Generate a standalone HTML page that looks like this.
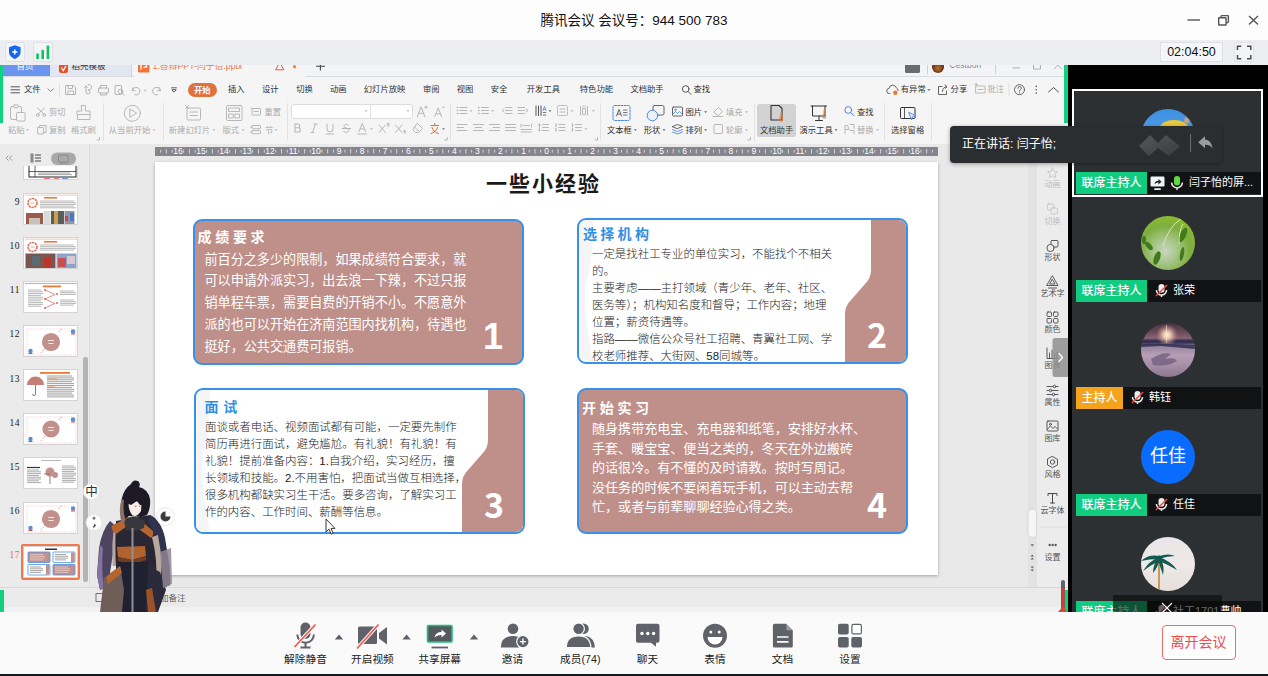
<!DOCTYPE html>
<html lang="zh-CN">
<head>
<meta charset="utf-8">
<title>腾讯会议</title>
<style>
*{box-sizing:border-box;margin:0;padding:0}
html,body{width:1268px;height:676px;overflow:hidden;background:#fff}
body{font-family:"Liberation Sans","Noto Sans CJK SC",sans-serif;position:relative;color:#222}
.abs{position:absolute}
svg{display:block;overflow:visible}
#titlebar{left:0;top:0;width:1268px;height:40px;background:#fdfdfd}
#title{left:0;top:11.500px;width:1268px;text-align:center;font-size:13.500px;line-height:18px;color:#111}
#tmbar{left:0;top:39.500px;width:1268px;height:25.500px;background:#edeef2}
#share{left:0;top:65px;width:1068px;height:547px;background:#e9e9e9;overflow:hidden}
#right{left:1068px;top:65px;width:200px;height:547px;background:#000;overflow:hidden}
#bottombar{left:0;top:612px;width:1268px;height:62px;background:#fafafa}
#darkstrip{left:0;top:674px;width:1268px;height:2px;background:#15161f}
.ibox{width:20px;height:20px;border:1px solid #e0e1e5;border-radius:2px;background:#f3f4f6}
#timer{left:1160px;top:42px;width:63px;height:20px;border:1px solid #dfe0e4;background:#f5f6f8;font-size:12.500px;line-height:18px;text-align:center;color:#111}
#tiles{left:4px;top:24px;width:191px;height:530px;background:#2d3033}
#t1b{left:4px;top:24px;width:191px;height:108px;border:2px solid #fff}
.av{width:54px;height:54px;border-radius:50%;overflow:hidden}
.lbar{left:8px;width:185px;height:22px;background:#111214}
.role{left:8px;height:22px;color:#fff;font-size:12px;line-height:22.500px;text-align:center;font-weight:500}
.pname{height:22px;line-height:21px;font-size:11px;color:#fff;white-space:nowrap}
#tip{left:950px;top:126px;width:272px;height:37px;background:#2b2e31;border-radius:4px;box-shadow:0 1px 4px rgba(0,0,0,.35);color:#fff;font-size:12px;line-height:37px;padding-left:12px}
#tabs{left:0;top:0;width:1068px;height:12px;background:#f3f4f7;border-bottom:1px solid #d9dbe0}
.tb{position:absolute;top:0;height:11px}
.tt{position:absolute;top:-6.600px;font-size:8.500px;line-height:16px;white-space:nowrap}
#menurow{left:0;top:12px;width:1068px;height:66.500px;background:#f5f5f5}
.mi{position:absolute;top:5.300px;font-size:8.300px;line-height:15px;color:#333;white-space:nowrap}
.rl{position:absolute;font-size:8.300px;line-height:12px;color:#333;white-space:nowrap}
.g{color:#ababab}
.vsep{position:absolute;width:1px;background:#e2e2e2;top:38px;height:38px}
#gl{left:0;top:0;width:3.300px;height:58px;background:#0fd180}
#gr{left:1064px;top:0;width:4px;height:58px;background:#0fd180}
#lp{left:0;top:78.500px;width:90px;height:528px;background:#ebebeb;border-right:1px solid #dedede}
.th{position:absolute;left:23px;width:55px;height:32px;background:#fff;border:1px solid #d4d4d4;overflow:hidden}
.tn{position:absolute;left:0;width:20px;text-align:right;font-family:"Liberation Serif",serif;font-size:9.500px;line-height:10px;color:#222;letter-spacing:.5px}
#ruler{left:155px;top:82px;width:783px;height:8.500px;background:#85858d;overflow:hidden}
.rn{position:absolute;top:-.8px;width:14px;text-align:center;font-size:8.500px;line-height:10px;color:#fff}
#slide{left:155px;top:97px;width:783px;height:413px;background:#fff;box-shadow:0 1px 3px rgba(0,0,0,.3)}
#stitle{left:0;top:4px;width:783px;text-align:center;font-size:21px;font-weight:700;letter-spacing:2px;line-height:36px;color:#1a1a1a;padding-right:6px}
.card{width:331px;height:146px;border:2px solid #3791e8;border-radius:9px;overflow:hidden}
.cb{background:#bf908a}
.cw{background:#fff}
.ch{position:absolute;font-size:14px;font-weight:700;letter-spacing:3.700px;line-height:18px;white-space:nowrap}
.cbody{position:absolute;white-space:nowrap}
.num{position:absolute;font-size:36px;font-weight:700;color:#fff;line-height:36px;font-family:"Noto Sans CJK SC","Liberation Sans",sans-serif}
#sp{left:1037px;top:78.500px;width:31px;height:443.500px;background:#ececec}
#vsb{left:1028px;top:78.500px;width:9px;height:443.500px;background:#e3e3e3}
.sl{position:absolute;left:1037px;width:31px;text-align:center;font-size:8px;line-height:10px;color:#555;white-space:nowrap}
#status{left:0;top:522px;width:1068px;height:20px;background:#ebebeb;border-top:1px solid #d8d8d8}
#status2{left:0;top:542px;width:1068px;height:5px;background:#f1f1f1}
.bl{position:absolute;top:40px;width:80px;text-align:center;font-size:10.700px;line-height:14px;color:#222;white-space:nowrap}
#leave{left:1161.500px;top:13px;width:74px;height:35px;border:1px solid #f26a6a;border-radius:4px;color:#ee4b4b;font-size:14px;line-height:33px;text-align:center;background:#fdfdfd}
</style>
</head>
<body>
<div id="titlebar" class="abs"></div>
<div id="title" class="abs">腾讯会议 会议号：944 500 783</div>
<svg class="abs" style="left:1180px;top:8px" width="84" height="24" viewBox="1180 8 84 24" fill="none" stroke="#555" stroke-width="1.400">
<path d="M1187.500 20h12.500"/>
<rect x="1218.700" y="17.800" width="7.400" height="7.200" rx=".6"/><path d="M1221 17.800v-1.400a.8.800 0 0 1 .8-.8h5.800a.8.800 0 0 1 .8.800v5.400a.8.800 0 0 1-.8.800h-1.700"/>
<path d="M1249 16l9 8.600M1258 16l-9 8.600"/>
</svg>
<div id="tmbar" class="abs"></div>
<div class="abs ibox" style="left:5px;top:42px"></div>
<div class="abs ibox" style="left:33px;top:42px"></div>
<svg class="abs" style="left:5px;top:42px" width="50" height="20" viewBox="5 42 50 20">
<path d="M14.800 45.200l5.800 2v4.600c0 3.600-2.600 6-5.800 7.200-3.200-1.200-5.800-3.600-5.800-7.200v-4.600z" fill="#1466f0"/>
<path d="M14.800 49.400v5.200M12.200 52h5.200" stroke="#fff" stroke-width="1.500" fill="none"/>
<rect x="36.200" y="53.500" width="2.600" height="5.500" rx=".6" fill="#0fc15f"/><rect x="41.400" y="49.800" width="2.600" height="9.200" rx=".6" fill="#0fc15f"/><rect x="46.600" y="45.500" width="2.600" height="13.500" rx=".6" fill="#0fc15f"/>
</svg>
<div class="abs" id="timer">02:04:50</div>
<div class="abs ibox" style="left:1234px;top:42px"></div>
<svg class="abs" style="left:1234px;top:42px" width="20" height="20" viewBox="1234 42 20 20" fill="none" stroke="#4a4c52" stroke-width="1.500">
<path d="M1237.500 50v-3.800h3.800M1247 46.200h3.800v3.800M1250.800 55v3.800h-3.800M1241.300 58.800h-3.800v-3.800"/></svg>
<div id="share" class="abs">
<div class="abs" id="tabs"><div class="tb" style="left:3px;width:47px;background:#6a95ee"></div><div class="tt" style="left:16.500px;color:#fff">首页</div><div class="tb" style="left:50px;width:82px;background:#e1e6f1;border-right:1px solid #cfd4de"></div><div class="tt" style="left:71.500px;color:#333">稻壳模板</div><svg class="abs" style="left:59px;top:1.500px" width="10" height="8" viewBox="0 0 10 8"><path d="M0 -3h9v6.500a2.500 2.500 0 0 1-2.500 2.500h-4a2.500 2.500 0 0 1-2.500-2.500z" fill="#f04b1f"/><path d="M2.300 .5l2 3.200 2.700-5" stroke="#fff" stroke-width="1.300" fill="none"/></svg><div class="tb" style="left:134px;width:172px;background:#f5f5f5;height:12px;border-radius:0"></div><svg class="abs" style="left:138px;top:0" width="12" height="8" viewBox="0 0 12 8"><path d="M0 -4h11.500v10.500a1 1 0 0 1-1 1h-9.500a1 1 0 0 1-1-1z" fill="#f0733c"/><path d="M3 4.500v-5.500h5.500v3.200h-3" stroke="#fff" stroke-width="1.300" fill="none"/></svg><div class="tt" style="left:152.500px;color:#e9743c;font-size:8.800px">1.答辩PPT-闫子怡.pptx</div><svg class="abs" style="left:274px;top:0" width="26" height="8" viewBox="274 0 26 8"><path d="M275.500 4.800l4.200-7.500 4.200 7.500z" fill="none" stroke="#e0574a" stroke-width="1"/><circle cx="294.500" cy="1.800" r="1.700" fill="#f08a3c"/></svg><svg class="abs" style="left:314px;top:0" width="12" height="8" viewBox="314 0 12 8"><path d="M320.400 -2v7.500M316 1.300h9" stroke="#444" stroke-width="1.100"/></svg><div class="tb" style="left:905px;width:15px;height:7.500px;background:#6b6b6b;border-radius:0 0 1.500px 1.500px"></div><div class="tb" style="left:926.500px;width:1px;height:9px;background:#cfd1d6"></div><div class="tb" style="left:994.500px;width:1px;height:9px;background:#cfd1d6"></div><div class="tb" style="left:932px;top:-4px;width:12px;height:12px;border-radius:50%;background:radial-gradient(circle at 50% 60%,#b9742f 0,#6b2f18 60%,#3a1c12 100%)"></div><div class="tt" style="left:949.500px;color:#8a8a8a;top:-8px">Cestbon</div><svg class="abs" style="left:1010px;top:0" width="54" height="8" viewBox="1010 0 54 8" fill="none" stroke="#b0b0b0" stroke-width="1"><path d="M1012.700 2.900h7.300"/><path d="M1033.500 -2v6h7v-8"/><path d="M1054 -4l7.500 8M1061.500 -4l-7.500 8"/></svg></div><div class="abs" id="menurow"><div class="mi " style="left:24px">文件</div><div class="mi " style="left:228px">插入</div><div class="mi " style="left:262px">设计</div><div class="mi " style="left:296.3px">切换</div><div class="mi " style="left:330px">动画</div><div class="mi " style="left:363.8px">幻灯片放映</div><div class="mi " style="left:423px">审阅</div><div class="mi " style="left:456.7px">视图</div><div class="mi " style="left:490.7px">安全</div><div class="mi " style="left:526.8px">开发工具</div><div class="mi " style="left:579.8px">特色功能</div><div class="mi " style="left:630.4px">文档助手</div><div class="mi " style="left:693.5px">查找</div><div class="mi " style="left:900.8px">有异常</div><div class="mi " style="left:950.6px">分享</div><div class="mi g" style="left:987.5px">批注</div><div class="abs" style="left:187.500px;top:6px;width:29.500px;height:14px;border-radius:7px;background:#e0723d;color:#fff;font-size:8.300px;font-weight:700;line-height:14px;text-align:center">开始</div></div><svg class="abs" style="left:0;top:12px" width="1068" height="67" viewBox="0 77 1068 67" fill="none" stroke-linecap="round" stroke-linejoin="round"><path d="M11 86.800h8.500M11 89.800h8.500M11 92.800h8.500" stroke="#555" stroke-width="1"/><path d="M48 88.800l2.700 2.700 2.700-2.700" stroke="#777" stroke-width=".9"/><path d="M59.500 84.500v12" stroke="#ddd" stroke-width="1"/><g stroke="#b4b4b4" stroke-width="1"><path d="M66 85.500h7.500l2 2v7h-9.500z"/><path d="M68 85.500v3h4.500v-3M68 94.500v-3.500h5.500v3.500"/><path d="M84.500 87.500l1.500-1.500 1.500 1.500M86 86v6a2 2 0 1 0 2-2c2 0 3.500-1.200 3.500-2.800s-1.500-2.700-3.500-2.700"/><rect x="98.500" y="88" width="10" height="5" rx="1"/><path d="M100.500 88v-2.500h6v2.500M100.500 93v2h6v-2"/><rect x="115" y="85.500" width="6.500" height="9" rx=".8"/><circle cx="120.500" cy="91.500" r="2.300"/><path d="M122.200 93.200l2 2"/><path d="M133 87.500l-1 3 3 .3M132.300 90.300a3.800 3.800 0 1 1 2.500 4.500"/><path d="M159.500 87.500l1 3-3 .3M160.200 90.300a3.800 3.800 0 1 0-2.500 4.500"/></g><path d="M143.4 89.7h3.200l-1.600 1.800z" fill="#b4b4b4"/><path d="M171.500 87.800h5M172 90l2 2.200 2-2.200z" stroke="#555" stroke-width=".9"/><circle cx="685.700" cy="89" r="3.300" stroke="#555" stroke-width="1"/><path d="M688.200 91.600l2.800 2.800" stroke="#555" stroke-width="1"/><path d="M890 93.500h-.5a2.600 2.600 0 0 1-.3-5.200 3.600 3.600 0 0 1 7-.6 2.800 2.800 0 0 1 1.800 2.800" stroke="#555" stroke-width=".9"/><circle cx="895.300" cy="92.800" r="2.200" fill="#ee7a33" stroke="none"/><path d="M927.4 89.2h3.200l-1.600 1.800z" fill="#666"/><path d="M942 86.500h-3.500v8h8v-3.500M942.500 91.500c0-3 1.500-4.500 4-4.700M945 85l2 1.800-2 1.800" stroke="#555" stroke-width=".9"/><path d="M976 86h9v7h-9zM978 89.500h5M975 84.500h2.500M976.200 83.200v2.600" stroke="#b4b4b4" stroke-width=".9"/><path d="M1009 84v12" stroke="#ddd"/><circle cx="1019.500" cy="89.700" r="5" stroke="#555" stroke-width=".9"/><path d="M1017.900 88.300a1.700 1.700 0 1 1 2.400 1.500c-.6.300-.8.700-.8 1.400M1019.500 92.700v.2" stroke="#555" stroke-width=".9"/><circle cx="1036.300" cy="86.300" r=".8" fill="#555"/><circle cx="1036.300" cy="89.700" r=".8" fill="#555"/><circle cx="1036.300" cy="93.100" r=".8" fill="#555"/><path d="M1048.500 92l5-4.500 5 4.500" stroke="#555" stroke-width="1"/></svg><div class="abs" id="gl"></div><div class="abs" id="gr"></div><div class="rl g" style="left:8px;top:58.5px">粘贴</div><div class="rl g" style="left:49px;top:41.0px">剪切</div><div class="rl g" style="left:49px;top:58.5px">复制</div><div class="rl g" style="left:71px;top:58.5px">格式刷</div><div class="rl g" style="left:108.8px;top:58.5px">从当前开始</div><div class="rl g" style="left:168.8px;top:58.5px">新建幻灯片</div><div class="rl g" style="left:222.5px;top:58.5px">版式</div><div class="rl g" style="left:264.5px;top:41.0px">重置</div><div class="rl g" style="left:265px;top:58.5px">节</div><div class="rl " style="left:607px;top:58.5px">文本框</div><div class="rl " style="left:643.8px;top:58.5px">形状</div><div class="rl " style="left:685.4px;top:41.0px">图片</div><div class="rl " style="left:685.4px;top:58.5px">排列</div><div class="rl g" style="left:726px;top:41.0px">填充</div><div class="rl g" style="left:726px;top:58.5px">轮廓</div><div class="abs" style="left:757px;top:38.500px;width:39px;height:33.500px;background:#d2d2d2;border-radius:2.500px"></div><div class="rl " style="left:760px;top:58.5px">文档助手</div><div class="rl " style="left:799.5px;top:58.5px">演示工具</div><div class="rl " style="left:857px;top:41.0px">查找</div><div class="rl g" style="left:857px;top:58.5px">替换</div><div class="rl " style="left:891px;top:59.0px">选择窗格</div><div class="abs" style="left:290.500px;top:38.500px;width:122px;height:15.500px;background:#fff;border:1px solid #dcdcdc;border-radius:3px"></div><div class="abs" style="left:370px;top:39px;width:1px;height:14.500px;background:#e0e0e0"></div><div class="vsep" style="left:102.5px"></div><div class="vsep" style="left:162.5px"></div><div class="vsep" style="left:286.8px"></div><div class="vsep" style="left:450.4px"></div><div class="vsep" style="left:600px"></div><div class="vsep" style="left:754px"></div><div class="vsep" style="left:884px"></div><div class="vsep" style="left:930.7px"></div><svg class="abs" style="left:0;top:36px" width="1068" height="44" viewBox="0 101 1068 44" fill="none" stroke="#b8b8b8" stroke-width="1" stroke-linecap="round" stroke-linejoin="round"><rect x="10.500" y="106.500" width="11" height="13" rx="1.500"/><rect x="13.500" y="105" width="5" height="2.600" rx=".8" fill="#f5f5f5"/><rect x="16.500" y="112.500" width="8.500" height="8.500" rx="1" fill="#f5f5f5"/><path d="M37.500 108l6.500 6M44.500 108l-6.500 6"/><circle cx="37.800" cy="115" r="1.400"/><circle cx="44.200" cy="115" r="1.400"/><rect x="37.500" y="127.500" width="6" height="6.500" rx=".6"/><path d="M39.500 127.500v-2h6.500v7h-2.500"/><path d="M81.500 105.500h4v5.500h4.500v3.500h-13v-3.500h4.500zM77.500 114.500v5h12.500v-5"/><circle cx="132.300" cy="113.300" r="8"/><path d="M129.800 109.300v8l6.500-4z"/><rect x="187" y="108" width="13.500" height="12" rx="1.200"/><path d="M190 112h7.500M190 115.500h7.500M185.500 105.500l3 3M188.500 105.500l-3 3"/><rect x="226.500" y="105.500" width="15.500" height="15" rx="1"/><rect x="229" y="108" width="10.500" height="3.500"/><rect x="229" y="114" width="4.200" height="4"/><rect x="235.300" y="114" width="4.200" height="4"/><rect x="252" y="108.500" width="8.500" height="6.500" rx=".6"/><path d="M254 111.500h4.500M251 107.500l1.500 1.500"/><rect x="252" y="125.500" width="8.500" height="3.200" rx=".6"/><rect x="252" y="130.500" width="8.500" height="3.200" rx=".6"/><path d="M250.500 127h1.500M250.500 132h1.500"/><path d="M417.300 116.800l3.800-10 3.800 10M418.700 113.300h5M426 106v2.500M424.800 107.200h2.500"/><path d="M434.800 116.800l3.400-9 3.400 9M436 113.800h4.500M442.500 107.200h2"/><path d="M295 124v8h3.200a2.100 2.100 0 0 0 0-4.200h-3.200M295 124h2.800a1.900 1.900 0 0 1 0 3.800" stroke-width="1.100"/><path d="M315.500 124l-3 8.500M314 124h3M311 132.500h3"/><path d="M327 124v5a3 3 0 0 0 6 0v-5M326.500 134h7"/><path d="M348.500 125.200c-.8-1-4.500-1.500-4.500 1s5 1.500 5 4-4.200 2.600-5.500 1.200M342 128.500h8.500"/><path d="M359 131.500l3.300-8 3.300 8M360.200 129h4.200M358 134h8.800"/><path d="M379 125l6.500 7.500M385.500 125l-6.500 7.500M387.500 124.500h1.500v-1.200h-1.500M387.500 126h1.800"/><path d="M395.500 125l6.500 7.500M402 125l-6.500 7.500M404 131.500h1.500v-1.200h-1.500M404 133h1.800"/><path d="M417.500 123.500l5 5-4 4h-3l-2.500-2.500z M414.500 127l4 4"/><path d="M431 125.500h7.500M434.700 123.500v2M432 127.500c.8 3 3 5 6.500 6M437.500 127.500c-.8 3-3 5-6.500 6" stroke="#d9722f"/><path d="M460 107.5h7M460 110.5h7M460 113.5h7"/><path d="M457.200 107.500h.6M457.200 110.500h.6M457.200 113.500h.6" stroke-width="1.400"/><path d="M481.5 107.5h7M481.5 110.5h7M481.5 113.5h7"/><path d="M478.500 107.500h.6M478.500 110.500h.6M478.500 113.500h.6" stroke-width="1.400"/><path d="M505.5 107.5h6.5M505.5 110.5h6.5M505.5 113.5h6.5"/><path d="M504 109l-2 1.500 2 1.500"/><path d="M518 107.5h6.5M518 110.5h6.5M518 113.5h6.5"/><path d="M526 109l2 1.500-2 1.500"/><path d="M536 106v9.500M538.500 106v9.500M541 106v9.500" stroke="#555"/><path d="M543 110.500l1.500-4 1.500 4M543.500 109.500h2" stroke="#4a86e0" stroke-width=".8"/><path d="M543.300 112.500h2.500M543.300 115h2.500" stroke="#555" stroke-width=".8"/><rect x="557.500" y="105.500" width="10" height="10" rx="1" stroke-dasharray="1.500 1"/><path d="M560 109h5M560 112h5"/><path d="M580.500 106.500v8.500M587.500 106.500v8.500"/><rect x="582.500" y="108.500" width="3" height="6" rx=".5"/><path d="M582.500 107l1.500-1.500 1.500 1.500"/><path d="M457 124.5h10M457 127.5h6.5M457 130.5h10"/><path d="M473.500 124.500h10M475.200 127.500h6.500M473.500 130.500h10"/><path d="M489.500 124.500h10M493 127.500h6.500M489.500 130.500h10"/><path d="M505.5 124.5h10M505.5 127.5h10M505.5 130.5h10"/><path d="M521 124v3M531.500 124v3M523 125.500h6.500M521 129.500h10.500M521 132h10.500"/><path d="M542.5 124.5h6M542.5 127.5h6M542.5 130.5h6"/><path d="M539.500 124v7M538.300 125.200l1.200-1.200 1.200 1.200M538.300 129.800l1.200 1.200 1.200-1.200"/><path d="M559 124.5h6M559 127.5h6M559 130.5h6"/><path d="M556 124v2.500M556 128.500v2.500" stroke-width="1.300"/><path d="M575.5 124.5h6M575.5 127.5h6M575.5 130.5h6"/><path d="M572.500 124v2.500M572.500 128.500v2.500" stroke-width="1.300"/><rect x="613" y="105.500" width="17" height="15" rx="1.500" stroke="#4a86e0" stroke-dasharray="2 1.200"/><path d="M616.500 116l2.500-6.500 2.500 6.500M617.400 114h3.300" stroke="#555" stroke-width=".9"/><path d="M623.500 110h3.500M623.500 112.500h3.500M623.500 115h3.500" stroke="#555" stroke-width=".8"/><rect x="653" y="105.500" width="11" height="9.500" rx="1.500" stroke="#555" stroke-width=".9"/><circle cx="652.500" cy="115.500" r="5.300" stroke="#4a86e0" fill="#eaf1fc"/><rect x="672.500" y="107" width="10" height="9" rx="1" stroke="#555" stroke-width=".9"/><path d="M673 114l2.500-2.500 2 2 2-2 2.500 2.500" stroke="#4a86e0" stroke-width=".8"/><circle cx="675.500" cy="109.700" r=".9" stroke="#4a86e0" stroke-width=".7"/><path d="M672.500 126.500l5-2 5 2-5 2z" stroke="#555" stroke-width=".9"/><path d="M672.500 129.500l5 2 5-2M672.500 132l5 2 5-2" stroke="#4a86e0" stroke-width=".9"/><path d="M714 112l4.500-4.500 4 4-4 4zM713 116.500h10"/><rect x="714" y="124.500" width="8.500" height="9" rx=".8"/><path d="M771 105.500h8l3 3v11.500h-11z" stroke="#333" stroke-width="1.100"/><path d="M781.500 112.500v3l1 1.500v4h-2.500v-4l1-1.500v-3" stroke="#e07a3c" stroke-width=".9"/><path d="M811 106h15.500M812.500 106v10h12.500v-10M819 116v4M815.500 120.500h7" stroke="#333" stroke-width="1"/><path d="M824.500 110.500v3l1 1.500v3h-2.500v-3l1-1.500v-3" stroke="#e07a3c" stroke-width=".9"/><circle cx="848.300" cy="110" r="3.400" stroke="#4a86e0"/><path d="M850.800 112.600l3.200 3.200" stroke="#4a86e0"/><path d="M845 133.500v-8h2.500l1.500 3.500M845.500 129.500h3M850 124.500h4v4M850 130.500h4v3"/><rect x="900.500" y="107.500" width="14.500" height="11" rx="1" stroke="#333"/><path d="M904.500 107.500v11" stroke="#333" stroke-width=".8"/><path d="M909 112.500l6.500 3-2.800 1-1 3z" stroke="#4a86e0" fill="#e4eefc" stroke-width=".9"/><path d="M26.0 129.2h3l-1.500 1.700z" fill="#b8b8b8" stroke="none"/><path d="M152.5 129.2h3l-1.500 1.700z" fill="#b8b8b8" stroke="none"/><path d="M212.3 129.2h3l-1.500 1.700z" fill="#b8b8b8" stroke="none"/><path d="M241.5 129.2h3l-1.500 1.700z" fill="#b8b8b8" stroke="none"/><path d="M274.5 129.2h3l-1.500 1.700z" fill="#b8b8b8" stroke="none"/><path d="M364.5 110.2h3l-1.500 1.700z" fill="#b8b8b8" stroke="none"/><path d="M406.5 110.2h3l-1.500 1.700z" fill="#b8b8b8" stroke="none"/><path d="M369.9 128.2h3l-1.500 1.700z" fill="#b8b8b8" stroke="none"/><path d="M442.0 128.2h3l-1.500 1.700z" fill="#777" stroke="none"/><path d="M469.5 110.2h3l-1.500 1.700z" fill="#b8b8b8" stroke="none"/><path d="M491.2 110.2h3l-1.500 1.700z" fill="#b8b8b8" stroke="none"/><path d="M548.5 110.2h3l-1.500 1.700z" fill="#666" stroke="none"/><path d="M570.5 110.2h3l-1.500 1.700z" fill="#b8b8b8" stroke="none"/><path d="M591.9 110.2h3l-1.500 1.700z" fill="#b8b8b8" stroke="none"/><path d="M584.5 128.2h3l-1.500 1.700z" fill="#b8b8b8" stroke="none"/><path d="M633.9 129.2h3l-1.500 1.700z" fill="#666" stroke="none"/><path d="M662.5 129.2h3l-1.500 1.700z" fill="#666" stroke="none"/><path d="M704.1 111.2h3l-1.500 1.700z" fill="#666" stroke="none"/><path d="M704.1 129.2h3l-1.500 1.700z" fill="#666" stroke="none"/><path d="M745.0 111.2h3l-1.500 1.700z" fill="#b8b8b8" stroke="none"/><path d="M745.0 129.2h3l-1.500 1.700z" fill="#b8b8b8" stroke="none"/><path d="M834.5 129.2h3l-1.500 1.700z" fill="#666" stroke="none"/><path d="M876.2 129.2h3l-1.500 1.700z" fill="#b8b8b8" stroke="none"/><path d="M99.5 137.5v2.500h-2.500" stroke="#aaa" stroke-width=".8"/><path d="M447.3 137.5v2.500h-2.500" stroke="#aaa" stroke-width=".8"/><path d="M597.5 137.5v2.500h-2.500" stroke="#aaa" stroke-width=".8"/><path d="M750.5 137.5v2.500h-2.500" stroke="#aaa" stroke-width=".8"/></svg><div class="abs" id="lp"><div class="th" style="top:4.8px"><svg width="55" height="32" viewBox="0 0 55 32" fill="none"><rect x="5" y="16" width="47" height="12" fill="none" stroke="#222" stroke-width="1"/><path d="M11 16v12M5 22.500h47" stroke="#222" stroke-width=".7"/><path d="M14 24.0h32M14 25.6h34" stroke="#777" stroke-width="0.7"/><path d="M20 29.500h6M30 29.500h5" stroke="#d44" stroke-width=".7"/><path d="M38 29.500h6" stroke="#36c" stroke-width=".7"/></svg></div><div class="th" style="top:49.0px"><svg width="55" height="32" viewBox="0 0 55 32" fill="none"><rect x="20" y="3" width="13" height="1.600" fill="#ee7a3a"/><circle cx="8.500" cy="9" r="4.500" fill="none" stroke="#d8654a" stroke-width="1.500" stroke-dasharray="2.200 .7"/><path d="M6.500 9h4" stroke="#b98" stroke-width=".7"/><path d="M1 1.200h53M1 30.800h53" stroke="#f0a580" stroke-width=".6"/><path d="M16 7.0h34M16 8.7h36M16 10.4h36M16 12.1h34M16 13.8h36" stroke="#999" stroke-width="0.7"/><rect x="2" y="19" width="17" height="11" fill="#9c5a4c"/><rect x="5" y="24" width="11" height="6" fill="#c9c1b6"/><rect x="19.500" y="17" width="7" height="13" fill="#d9dcdc"/><rect x="27" y="17" width="13" height="13" fill="#5b5e58"/><rect x="30" y="17" width="4" height="13" fill="#caa04c"/><rect x="40.500" y="17" width="10" height="13" fill="#8d97a8"/><rect x="46" y="19" width="4" height="8" fill="#4a78c4"/><rect x="41" y="22" width="3" height="5" fill="#c44"/></svg></div><div class="tn" style="top:53.5px">9</div><div class="th" style="top:93.2px"><svg width="55" height="32" viewBox="0 0 55 32" fill="none"><rect x="20" y="3" width="13" height="1.600" fill="#ee7a3a"/><circle cx="8.500" cy="9" r="4.500" fill="none" stroke="#d8654a" stroke-width="1.500" stroke-dasharray="2.200 .7"/><path d="M6.500 9h4" stroke="#b98" stroke-width=".7"/><path d="M1 1.200h53M1 30.800h53" stroke="#f0a580" stroke-width=".6"/><path d="M16 7.0h34M16 8.7h36M16 10.4h36M16 12.1h34" stroke="#999" stroke-width="0.7"/><rect x="1.500" y="15.500" width="30" height="14.500" fill="#7a5651"/><rect x="8" y="18" width="8" height="10" fill="#5a6a73"/><rect x="20" y="20" width="7" height="9" fill="#b8342c"/><rect x="32.500" y="15.500" width="20" height="14.500" fill="#8fa3c6"/><rect x="34" y="20" width="8" height="9" fill="#c8504e"/><rect x="43" y="18" width="8" height="8" fill="#d7c9d2"/></svg></div><div class="tn" style="top:97.7px">10</div><div class="th" style="top:137.3px"><svg width="55" height="32" viewBox="0 0 55 32" fill="none"><path d="M1 1.500h53M1 30.500h53" stroke="#ee7a3a" stroke-width=".7"/><rect x="19" y="3.500" width="18" height="1.800" fill="#ee7a3a"/><path d="M4 8.0h13M4 9.8h15M4 11.6h15M4 13.4h13M4 15.2h15M4 17.0h15M4 18.8h13M4 20.6h15M4 22.4h15M4 24.2h13" stroke="#999" stroke-width="0.7"/><path d="M36 9.0h14M36 10.7h16M36 12.4h16" stroke="#999" stroke-width="0.7"/><path d="M36 18.0h14M36 19.7h16M36 21.4h16M36 23.1h14" stroke="#999" stroke-width="0.7"/><path d="M21 8l10 4.500-10 4.500M21 17l10 4.500-10 4.500" stroke="#d9635a" stroke-width=".7" fill="none"/><circle cx="21" cy="8" r="1" fill="#d9635a"/><circle cx="21" cy="17" r="1" fill="#d9635a"/><circle cx="21" cy="26" r="1" fill="#d9635a"/><circle cx="33" cy="12" r="1" fill="#d9635a"/><circle cx="33" cy="21" r="1" fill="#d9635a"/></svg></div><div class="tn" style="top:141.8px">11</div><div class="th" style="top:181.4px"><svg width="55" height="32" viewBox="0 0 55 32" fill="none"><circle cx="27" cy="16" r="9.1" fill="#c3918c"/><rect x="3" y="3" width="49" height="26" fill="none" stroke="#e7b7b3" stroke-width=".7" stroke-dasharray="1 1.200"/><circle cx="6.500" cy="25" r="2.200" fill="#5b8fd0"/><circle cx="49" cy="5.500" r="2.200" fill="#5b8fd0"/><path d="M4.500 27.500h4M47 8h4" stroke="#d64b4b" stroke-width="1"/><path d="M17 27l4-5M35 6l3-4" stroke="#c3918c" stroke-width=".8" stroke-dasharray="1.500 1"/><path d="M24 14.5h6M24.5 17.5h5" stroke="#fff" stroke-width=".8"/></svg></div><div class="tn" style="top:185.9px">12</div><div class="th" style="top:225.6px"><svg width="55" height="32" viewBox="0 0 55 32" fill="none"><rect x="16" y="2" width="30" height="1.800" fill="#ee7a3a"/><path d="M3 15a8.500 8.500 0 0 1 17 0z" fill="#c67e78"/><path d="M11.500 15v9a1.500 1.500 0 0 1-3 0" stroke="#7a5a50" stroke-width=".8" fill="none"/><path d="M23 6.0h25M23 7.9h27M23 9.8h27M23 11.7h25M23 13.6h27M23 15.5h27M23 17.4h25M23 19.299999999999997h27M23 21.2h27M23 23.099999999999998h25M23 25.0h27M23 26.9h27" stroke="#777" stroke-width="0.7"/><path d="M23 9h10M23 17h8" stroke="#e8823a" stroke-width=".8"/></svg></div><div class="tn" style="top:230.1px">13</div><div class="th" style="top:269.7px"><svg width="55" height="32" viewBox="0 0 55 32" fill="none"><circle cx="27" cy="15" r="8.6" fill="#c3918c"/><rect x="3" y="3" width="49" height="26" fill="none" stroke="#e7b7b3" stroke-width=".7" stroke-dasharray="1 1.200"/><circle cx="6.500" cy="25" r="2.200" fill="#5b8fd0"/><circle cx="49" cy="5.500" r="2.200" fill="#5b8fd0"/><path d="M4.500 27.500h4M47 8h4" stroke="#d64b4b" stroke-width="1"/><path d="M17 27l4-5M35 6l3-4" stroke="#c3918c" stroke-width=".8" stroke-dasharray="1.500 1"/><path d="M24 13.5h6M24.5 16.5h5" stroke="#fff" stroke-width=".8"/></svg></div><div class="tn" style="top:274.2px">14</div><div class="th" style="top:313.9px"><svg width="55" height="32" viewBox="0 0 55 32" fill="none"><path d="M17 2.500h20" stroke="#999" stroke-width=".7"/><circle cx="26" cy="14" r="4.500" fill="#c3918c"/><circle cx="31" cy="17" r="3" fill="#c3918c"/><path d="M20 16l6 0M26 18v8" stroke="#8c5a52" stroke-width=".8"/><path d="M3 9.500h13" stroke="#333" stroke-width="1.200"/><path d="M3 12.0h12M3 13.8h14M3 15.6h14M3 17.4h12M3 19.2h14M3 21.0h14M3 22.8h12M3 24.6h14" stroke="#888" stroke-width="0.7"/><path d="M38 8.0h12M38 9.8h14M38 11.6h14M38 13.4h12M38 15.2h14M38 17.0h14M38 18.8h12M38 20.6h14M38 22.4h14M38 24.2h12" stroke="#888" stroke-width="0.7"/></svg></div><div class="tn" style="top:318.4px">15</div><div class="th" style="top:358.1px"><svg width="55" height="32" viewBox="0 0 55 32" fill="none"><circle cx="27" cy="16" r="9.1" fill="#c3918c"/><rect x="3" y="3" width="49" height="26" fill="none" stroke="#e7b7b3" stroke-width=".7" stroke-dasharray="1 1.200"/><circle cx="6.500" cy="25" r="2.200" fill="#5b8fd0"/><circle cx="49" cy="5.500" r="2.200" fill="#5b8fd0"/><path d="M4.500 27.500h4M47 8h4" stroke="#d64b4b" stroke-width="1"/><path d="M17 27l4-5M35 6l3-4" stroke="#c3918c" stroke-width=".8" stroke-dasharray="1.500 1"/><path d="M24 14.5h6M24.5 17.5h5" stroke="#fff" stroke-width=".8"/></svg></div><div class="tn" style="top:362.6px">16</div><div class="th" style="top:402.2px"><svg width="55" height="32" viewBox="0 0 55 32" fill="none"><rect x="21" y="1.500" width="12" height="1.500" fill="#333"/><g stroke="#4a90e2" stroke-width=".8"><rect x="4" y="5" width="22" height="10.500" rx="1" fill="#c3918c"/><rect x="29" y="5" width="22" height="10.500" rx="1" fill="#fff"/><rect x="4" y="17.500" width="22" height="10.500" rx="1" fill="#fff"/><rect x="29" y="17.500" width="22" height="10.500" rx="1" fill="#c3918c"/></g><rect x="47" y="5.500" width="3.500" height="9.500" fill="#c3918c"/><rect x="22" y="18" width="3.500" height="9.500" fill="#c3918c"/><path d="M31 7.5h11M31 9.3h13M31 11.1h13M31 12.9h11" stroke="#666" stroke-width="0.6"/><path d="M6 20.0h11M6 21.8h13M6 23.6h13M6 25.4h11" stroke="#666" stroke-width="0.6"/><path d="M6 7.5h13M6 9.3h15M6 11.1h15M6 12.9h13" stroke="#f3e4e2" stroke-width="0.6"/><path d="M31 20.0h13M31 21.8h15M31 23.6h15M31 25.4h13" stroke="#f3e4e2" stroke-width="0.6"/></svg></div><div class="abs" style="left:21px;top:400.2px;width:59px;height:36px;border:2px solid #f07a50;border-radius:2px"></div><div class="tn" style="top:406.7px;color:#e8703a">17</div><div class="abs" style="left:0;top:0;width:89px;height:22.500px;background:#ebebeb"></div><svg class="abs" style="left:0;top:0" width="90" height="24" viewBox="0 143.500 90 24" fill="none"><path d="M8.500 155l-2.500 2.500 2.500 2.500M12 155l-2.500 2.500 2.500 2.500" stroke="#999" stroke-width=".9"/><path d="M35 154.500h6M35 157.500h6M35 160.500h6" stroke="#444" stroke-width="1"/><rect x="31" y="153.500" width="2" height="2" fill="none" stroke="#444" stroke-width=".7"/><rect x="31" y="156.500" width="2" height="2" fill="none" stroke="#444" stroke-width=".7"/><rect x="31" y="159.500" width="2" height="2" fill="none" stroke="#444" stroke-width=".7"/><rect x="51" y="152" width="25" height="12.500" rx="6.200" fill="#a9a9a9"/><rect x="58.500" y="154.500" width="9.500" height="7" rx=".8" stroke="#8a8a8a" stroke-width="1"/><path d="M59.500 162.500h8" stroke="#8a8a8a" stroke-width=".9"/></svg><div class="abs" style="left:83px;top:213.500px;width:4.500px;height:225px;border-radius:2.200px;background:#b4b4b4"></div><div class="abs" style="left:28px;top:444px;width:34px;height:14.500px;border-radius:7.200px;background:#dbdbdb"></div><svg class="abs" style="left:40px;top:446px" width="10" height="10" viewBox="0 0 10 10"><path d="M5 .5v9M.5 5h9" stroke="#9a9a9a" stroke-width="1"/></svg></div><div class="abs" id="ruler"><div class="rn" style="left:15.9px">16</div><div class="rn" style="left:38.9px">15</div><div class="rn" style="left:61.9px">14</div><div class="rn" style="left:85.0px">13</div><div class="rn" style="left:108.0px">12</div><div class="rn" style="left:131.1px">11</div><div class="rn" style="left:154.1px">10</div><div class="rn" style="left:177.1px">9</div><div class="rn" style="left:200.2px">8</div><div class="rn" style="left:223.2px">7</div><div class="rn" style="left:246.3px">6</div><div class="rn" style="left:269.3px">5</div><div class="rn" style="left:292.3px">4</div><div class="rn" style="left:315.4px">3</div><div class="rn" style="left:338.4px">2</div><div class="rn" style="left:361.5px">1</div><div class="rn" style="left:384.5px">0</div><div class="rn" style="left:407.5px">1</div><div class="rn" style="left:430.6px">2</div><div class="rn" style="left:453.6px">3</div><div class="rn" style="left:476.7px">4</div><div class="rn" style="left:499.7px">5</div><div class="rn" style="left:522.7px">6</div><div class="rn" style="left:545.8px">7</div><div class="rn" style="left:568.8px">8</div><div class="rn" style="left:591.9px">9</div><div class="rn" style="left:614.9px">10</div><div class="rn" style="left:637.9px">11</div><div class="rn" style="left:661.0px">12</div><div class="rn" style="left:684.0px">13</div><div class="rn" style="left:707.1px">14</div><div class="rn" style="left:730.1px">15</div><div class="rn" style="left:753.1px">16</div><svg class="abs" style="left:0;top:0" width="783" height="9" viewBox="0 0 783 9"><path d="M5.6 2.85v2.8M11.3 2.0v4.5M17.1 2.85v2.8M28.6 2.85v2.8M34.4 2.0v4.5M40.1 2.85v2.8M51.7 2.85v2.8M57.4 2.0v4.5M63.2 2.85v2.8M74.7 2.85v2.8M80.5 2.0v4.5M86.2 2.85v2.8M97.7 2.85v2.8M103.5 2.0v4.5M109.3 2.85v2.8M120.8 2.85v2.8M126.5 2.0v4.5M132.3 2.85v2.8M143.8 2.85v2.8M149.6 2.0v4.5M155.3 2.85v2.8M166.9 2.85v2.8M172.6 2.0v4.5M178.4 2.85v2.8M189.9 2.85v2.8M195.7 2.0v4.5M201.4 2.85v2.8M212.9 2.85v2.8M218.7 2.0v4.5M224.5 2.85v2.8M236.0 2.85v2.8M241.7 2.0v4.5M247.5 2.85v2.8M259.0 2.85v2.8M264.8 2.0v4.5M270.5 2.85v2.8M282.1 2.85v2.8M287.8 2.0v4.5M293.6 2.85v2.8M305.1 2.85v2.8M310.9 2.0v4.5M316.6 2.85v2.8M328.1 2.85v2.8M333.9 2.0v4.5M339.7 2.85v2.8M351.2 2.85v2.8M356.9 2.0v4.5M362.7 2.85v2.8M374.2 2.85v2.8M380.0 2.0v4.5M385.7 2.85v2.8M397.3 2.85v2.8M403.0 2.0v4.5M408.8 2.85v2.8M420.3 2.85v2.8M426.1 2.0v4.5M431.8 2.85v2.8M443.3 2.85v2.8M449.1 2.0v4.5M454.9 2.85v2.8M466.4 2.85v2.8M472.1 2.0v4.5M477.9 2.85v2.8M489.4 2.85v2.8M495.2 2.0v4.5M500.9 2.85v2.8M512.5 2.85v2.8M518.2 2.0v4.5M524.0 2.85v2.8M535.5 2.85v2.8M541.3 2.0v4.5M547.0 2.85v2.8M558.5 2.85v2.8M564.3 2.0v4.5M570.1 2.85v2.8M581.6 2.85v2.8M587.3 2.0v4.5M593.1 2.85v2.8M604.6 2.85v2.8M610.4 2.0v4.5M616.1 2.85v2.8M627.7 2.85v2.8M633.4 2.0v4.5M639.2 2.85v2.8M650.7 2.85v2.8M656.5 2.0v4.5M662.2 2.85v2.8M673.7 2.85v2.8M679.5 2.0v4.5M685.3 2.85v2.8M696.8 2.85v2.8M702.5 2.0v4.5M708.3 2.85v2.8M719.8 2.85v2.8M725.6 2.0v4.5M731.3 2.85v2.8M742.9 2.85v2.8M748.6 2.0v4.5M754.4 2.85v2.8M765.9 2.85v2.8M771.7 2.0v4.5M777.4 2.85v2.8" stroke="#e8e8ea" stroke-width=".8" fill="none"/></svg></div><div class="abs" id="slide">
<div class="abs" id="stitle">一些小经验</div>
<div class="abs card cb" style="left:37.5px;top:56.5px">
<div class="ch" style="left:3px;top:7px;color:#fff">成绩要求</div>
<div class="cbody" style="left:10px;top:28px;font-size:13.100px;line-height:21.900px;color:#fff">前百分之多少的限制，如果成绩符合要求，就<br>可以申请外派实习，出去浪一下辣，不过只报<br>销单程车票，需要自费的开销不小。不愿意外<br>派的也可以开始在济南范围内找机构，待遇也<br>挺好，公共交通费可报销。</div>
<div class="num" style="left:288.500px;top:98.300px;font-family:'Liberation Sans',sans-serif">1</div>
</div>
<div class="abs card cw" style="left:421.5px;top:56px"><svg class="abs" style="left:0;top:0" width="327" height="142" viewBox="0 0 327 142"><path d="M0 0h14v8Q14 40 8 60T14 142H0z" fill="#f1f1f1" opacity=".7"/><path d="M292 0V50Q292 58 286 64L272 80Q266 86 266 94V142H327V0z" fill="#bf908a"/></svg>
<div class="ch" style="left:4.500px;top:5px;color:#2f8fe6;letter-spacing:3.300px">选择机构</div>
<div class="cbody" style="left:13.500px;top:25.800px;font-size:11.450px;line-height:17.100px;color:#1c1c1c;font-weight:300">一定是找社工专业的单位实习，不能找个不相关<br>的。<br>主要考虑——主打领域（青少年、老年、社区、<br>医务等）；机构知名度和督导；工作内容；地理<br>位置；薪资待遇等。<br>指路——微信公众号社工招聘、青翼社工网、学<br>校老师推荐、大街网、58同城等。</div>
<div class="num" style="left:288.500px;top:95.500px;font-size:34px">2</div>
</div>
<div class="abs card cw" style="left:38.5px;top:225.5px"><svg class="abs" style="left:0;top:0" width="327" height="142" viewBox="0 0 327 142"><path d="M0 0h14v8Q14 40 8 60T14 142H0z" fill="#f1f1f1" opacity=".7"/><path d="M292 0V50Q292 58 286 64L272 80Q266 86 266 94V142H327V0z" fill="#bf908a"/></svg>
<div class="ch" style="left:9px;top:8.500px;color:#2f8fe6;letter-spacing:4.800px">面试</div>
<div class="cbody" style="left:9.500px;top:29px;font-size:11.450px;line-height:17.100px;color:#1c1c1c;font-weight:300">面谈或者电话、视频面试都有可能，一定要先制作<br>简历再进行面试，避免尴尬。有礼貌！有礼貌！有<br>礼貌！提前准备内容：1.自我介绍，实习经历，擅<br>长领域和技能。2.不用害怕，把面试当做互相选择，<br>很多机构都缺实习生干活。要多咨询，了解实习工<br>作的内容、工作时间、薪酬等信息。</div>
<div class="num" style="left:288.500px;top:96.200px;font-size:34px">3</div>
</div>
<div class="abs card cb" style="left:422px;top:225.5px">
<div class="ch" style="left:3px;top:9px;color:#fff">开始实习</div>
<div class="cbody" style="left:13px;top:29.500px;font-size:13.050px;line-height:19.500px;color:#fff">随身携带充电宝、充电器和纸笔，安排好水杯、<br>手套、暖宝宝、便当之类的，冬天在外边搬砖<br>的话很冷。有不懂的及时请教。按时写周记。<br>没任务的时候不要闲着玩手机，可以主动去帮<br>忙，或者与前辈聊聊经验心得之类。</div>
<div class="num" style="left:288px;top:96.200px;font-size:34px">4</div>
</div>
</div>
<div class="abs" id="vsb"></div><div class="abs" id="sp"></div><div class="sl" style="top:115.0px;color:#bdbdbd">动画</div><div class="sl" style="top:151.6px;color:#bdbdbd">切换</div><div class="sl" style="top:188.0px;color:#555">形状</div><div class="sl" style="top:224.0px;color:#555">艺术字</div><div class="sl" style="top:260.0px;color:#555">颜色</div><div class="sl" style="top:296.0px;color:#555">图表</div><div class="sl" style="top:332.5px;color:#555">属性</div><div class="sl" style="top:368.5px;color:#555">图库</div><div class="sl" style="top:405.0px;color:#555">风格</div><div class="sl" style="top:441.0px;color:#555">云字体</div><div class="sl" style="top:487.5px;color:#555">设置</div><svg class="abs" style="left:1020px;top:95px" width="48" height="430" viewBox="1020 160 48 430" fill="none" stroke="#4a4a4a" stroke-width=".9" stroke-linejoin="round" stroke-linecap="round"><path d="M1052.5 168l1.500 3.200 3.500.4-2.600 2.400.7 3.500-3.100-1.800-3.100 1.800.7-3.500-2.600-2.400 3.500-.4z" stroke="#c4c4c4"/><rect x="1047.5" y="204" width="6.500" height="6" rx="1.200" stroke="#c4c4c4"/><rect x="1051.0" y="208" width="6.500" height="6" rx="1.200" stroke="#c4c4c4" fill="#ececec"/><rect x="1051.0" y="240.500" width="7" height="6.500" rx="1"/><circle cx="1050.5" cy="248" r="3.600" fill="#ececec"/><path d="M1052.5 276l5.500 9.500h-11zM1052.5 279.500l2.500 4.500h-5zM1048.5 288h8"/><rect x="1047.0" y="312" width="4.500" height="4.500" rx="1"/><rect x="1053.5" y="312" width="4.500" height="4.500" rx="1"/><rect x="1047.0" y="318.500" width="4.500" height="4.500" rx="1"/><rect x="1053.5" y="318.500" width="4.500" height="4.500" rx="1"/><path d="M1047.0 348v10.500h11M1049.5 358v-5M1052.0 358v-8M1054.5 358v-4M1057.0 358v-6"/><path d="M1047.0 386.500h11M1047.0 390.500h11M1047.0 394.500h11"/><circle cx="1054.5" cy="386.500" r="1.300" fill="#ececec"/><circle cx="1050.5" cy="390.500" r="1.300" fill="#ececec"/><circle cx="1053.5" cy="394.500" r="1.300" fill="#ececec"/><rect x="1047.0" y="421" width="11" height="10" rx="1"/><path d="M1047.5 429l3-3 2.500 2.500 2-2 2.500 2.500"/><circle cx="1050.5" cy="424.300" r="1"/><path d="M1052.5 456.500l5 2.800v5.600l-5 2.800-5-2.800v-5.600z"/><circle cx="1052.5" cy="462" r="2.200"/><path d="M1048.0 495.500v-2h9v2M1052.5 493.500v9.500M1050.5 503h4" stroke-width="1"/><path d="M1040 527h26" stroke="#dcdcdc"/><circle cx="1049.5" cy="545" r=".7" fill="#4a4a4a"/><circle cx="1052.5" cy="545" r=".7" fill="#4a4a4a"/><circle cx="1055.5" cy="545" r=".7" fill="#4a4a4a"/><rect x="1052.500" y="338" width="17" height="39" rx="2.500" fill="#8f8f8f" fill-opacity=".85" stroke="none"/><path d="M1059 353.500l3.500 4-3.500 4" stroke="#fff" stroke-width="1.300"/><rect x="1028" y="509" width="8.500" height="28.500" rx="4.200" fill="#f6f6f6" stroke="#cfcfcf" stroke-width=".7"/><path d="M1030.500 544.200h3.500l-1.750 2.200z" fill="#666" stroke="none"/><path d="M1030.500 556.500l1.750-2 1.750 2zM1030.500 559.500l1.750-2 1.750 2z" fill="#666" stroke="none"/><path d="M1030.500 566.500l1.750 2 1.750-2zM1030.500 569.500l1.750 2 1.750-2z" fill="#666" stroke="none"/></svg><div class="abs" id="status"><div class="abs" style="left:117.500px;top:4px;font-size:8.500px;line-height:12px;color:#666;white-space:nowrap">单击此处添加备注</div><svg class="abs" style="left:95px;top:4px" width="12" height="12" viewBox="0 0 12 12"><rect x="1" y="1.500" width="9" height="8" fill="none" stroke="#666" stroke-width=".9"/></svg><div class="abs" style="left:140px;top:19px;width:1px;height:6px;background:#ddd"></div><div class="abs" style="left:394px;top:19px;width:1px;height:6px;background:#ddd"></div></div><div class="abs" id="status2"></div><div class="abs" style="left:0;top:525px;width:3.500px;height:22px;background:#0fd180"></div><div class="abs" style="left:1064px;top:525px;width:4px;height:22px;background:#0fd180"></div><svg class="abs" style="left:1056px;top:513px" width="12" height="34" viewBox="1056 578 12 34"><path d="M1061 582a2 2 0 0 1 4 0v30h-4z" fill="#5d6570"/><path d="M1062 588h2.500v24h-2.500z" fill="#c8442c"/><path d="M1058 612l3.500-4h3l2 4z" fill="#d8482c"/></svg><svg class="abs" style="left:325px;top:453px" width="12" height="18" viewBox="0 0 12 18"><path d="M1 1v13l3-2.800 2.200 5 2-.9-2.200-4.900h4z" fill="#fff" stroke="#222" stroke-width=".9"/></svg><svg class="abs" style="left:80px;top:410px" width="100" height="137" viewBox="80 475 100 137"><path d="M110 521Q102 530 99 548L97 575L100 590L108 586L112 560L118 528z" fill="#4d4560"/><path d="M100 545L97 575L100 590L104 588Q101 570 103 548z" fill="#8572a2"/><path d="M114 524L118.500 523Q115 545 116 566L112.500 566Q111.500 545 114 524z" fill="#b8a79e"/><path d="M116 521L150 515Q160 520 164 536L169 566L170 584L160 590L150 586L118 590Q114 560 116 521z" fill="#2a2735"/><path d="M150 515Q161 520 165 538L169.500 566L170 585L161 589Q162 560 156 540Q153 528 148 522z" fill="#30334f"/><path d="M152 537L158 535L162 560L160 588L156 586Q158 560 152 537z" fill="#b9a89e"/><path d="M117 547L145 546L146 556L132 560L118 557z" fill="#b1632d"/><path d="M118 557L132 560L146 556L146 560L132 565L118 561z" fill="#6e3d22"/><path d="M111.500 526L128 517L133 522L116 534Q112 532 111.500 526z" fill="#b5652d"/><path d="M140 520L153 531Q154 536 151 538L136 527z" fill="#b5652d"/><path d="M124 521Q128 516 136 517L145 521L144 528L136 531L126 530z" fill="#37373d"/><path d="M118 562L148 562L152 612H114z" fill="#1f2030"/><path d="M104 578L120 566L124 590L122 612H100z" fill="#6f5d58"/><path d="M106 577L120 566L122 573L108 584z" fill="#b5652d"/><path d="M148 566L160 572L166 590L158 612H146z" fill="#2a2a3c"/><path d="M146 590L152 588L156 612H148z" fill="#9a5228"/><path d="M160 552L171 548L172 584L163 588z" fill="#8f8592" opacity=".85"/><path d="M131 484Q133 479 138 481Q141 484 139 487Q148 489 150 499Q151 508 147 515L141 517L129 516L124 520Q119 510 122 498Q124 489 131 484z" fill="#1d1a25"/><path d="M121.500 499Q118 512 122 524L125.500 520Q122.500 510 124 500z" fill="#8a7068"/><path d="M128.500 503Q134 499 141.500 503L141 511Q137 517.500 132.500 515.500Q128.500 511 128.500 503z" fill="#f7eeea"/><path d="M127.500 503.500Q132 497 137 501L131 505zM137 501Q141 499 144 505L140 505z" fill="#1d1a25"/><path d="M134.800 506.200h1.800M139 506.200h1.400" stroke="#b8322a" stroke-width=".8"/><path d="M131.500 528h2v84h-2z" fill="#8f8f92"/><circle cx="91.500" cy="491.500" r="8.200" fill="#fdfdfd" stroke="#ddd" stroke-width=".6"/><circle cx="94" cy="522.500" r="8" fill="#fdfdfd" stroke="#ddd" stroke-width=".6"/><circle cx="165.500" cy="516.500" r="9" fill="#fdfdfd" stroke="#ddd" stroke-width=".6"/><path d="M165.500 511.500a5 5 0 1 0 5 5h-5z" fill="#3c3c3c"/><circle cx="94" cy="518.200" r="1.100" fill="none" stroke="#333" stroke-width=".8"/><path d="M94.200 524.200a1.200 1.200 0 1 1-1 1.800c1 .2 1.300 1 .4 2.200" fill="#333" stroke="#333" stroke-width=".5"/><text x="91.500" y="496" font-size="12.500" text-anchor="middle" fill="#333" font-family="Liberation Sans, Noto Sans CJK SC, sans-serif">中</text></svg>
</div>
<div id="right" class="abs">
<div class="abs" id="tiles"></div>
<div class="abs av" style="left:73px;top:44px;background:linear-gradient(180deg,#3d8fe0 0%,#4f9be6 35%,#5aa0e0 60%,#7aa4c9 100%)"><svg width="54" height="54" viewBox="0 0 54 54"><ellipse cx="33" cy="19" rx="14" ry="8" fill="#e7c93a"/><path d="M44 8l5 2-2 5-4-2z" fill="#c9a27a"/></svg></div>
<div class="abs av" style="left:73px;top:151px;background:radial-gradient(circle at 45% 65%,#c9d6c0 0,#a8c78c 25%,#7eae3e 55%,#8cbc2c 80%,#6f9f22 100%)"><svg width="54" height="54" viewBox="0 0 54 54"><g fill="#3f7a1c"><ellipse cx="42" cy="19" rx="3" ry="8" transform="rotate(25 42 19)"/><ellipse cx="16" cy="42" rx="3" ry="7" transform="rotate(20 16 42)"/><ellipse cx="41" cy="38" rx="2" ry="7" transform="rotate(10 41 38)"/><ellipse cx="8" cy="30" rx="2.500" ry="5" transform="rotate(-40 8 30)"/><ellipse cx="3" cy="24" rx="2" ry="4"/></g><path d="M22 30Q28 10 40 3M38 28Q38 14 42 8" stroke="#d7e8b8" stroke-width="1" fill="none"/></svg></div>
<div class="abs av" style="left:73px;top:258px;background:linear-gradient(180deg,#45323f 0%,#6d4c5c 18%,#8a6470 28%,#2f2d50 33%,#3a355a 37%,#9583a0 42%,#b7a0b6 60%,#a48da4 80%,#8c7890 100%)"><svg width="54" height="54" viewBox="0 0 54 54"><defs><radialGradient id="sun"><stop offset="0" stop-color="#fff6e6"/><stop offset=".35" stop-color="#f3cdb0" stop-opacity=".9"/><stop offset="1" stop-color="#c08a8a" stop-opacity="0"/></radialGradient></defs><circle cx="26" cy="12" r="11" fill="url(#sun)"/><path d="M25.500 2v18" stroke="#ffe9d2" stroke-width=".8" opacity=".7"/><path d="M10 36Q22 28 30 31L24 36Q34 34 36 38Q26 44 12 42z" fill="#6d5c7e" opacity=".75"/><path d="M0 24L20 23 54 26V22L30 21 0 21z" fill="#2b2a4c" opacity=".8"/></svg></div>
<div class="abs av" style="left:73px;top:365px;background:#0a6cff;color:#fff;font-size:18px;line-height:53px;text-align:center">任佳</div>
<div class="abs av" style="left:73px;top:472px;background:linear-gradient(180deg,#e9e4e6 0%,#efeae8 50%,#e6dfda 100%)"><svg width="54" height="54" viewBox="0 0 54 54"><path d="M17 18h2v36h-2z" fill="#c79a5b"/><g fill="#12594f"><path d="M18 19Q8 17 0 24Q8 22 18 22z"/><path d="M18 19Q28 16 34 19Q26 19 18 22z"/><path d="M18 20Q8 24 2 34Q10 28 18 24z"/><path d="M18 20Q30 24 36 33Q28 28 18 24z"/><path d="M17 21Q12 28 12 36Q17 30 19 22z"/><path d="M19 21Q24 28 22 38Q19 30 17 22z"/></g></svg></div>
<div class="abs" id="t1b"></div>
<div class="abs lbar" style="top:107px"></div><div class="abs role" style="top:107px;width:71px;background:#0fcc7f">联席主持人</div><svg class="abs" style="left:82px;top:111px" width="15" height="15" viewBox="0 0 15 15"><rect x=".5" y=".5" width="14" height="10" rx="1.200" fill="#f2f2f2"/><rect x="4" y="12.200" width="7" height="1.800" rx=".9" fill="#f2f2f2"/><path d="M4.500 8.200Q5 4.800 8.500 4.800V3l3 2.800-3 2.800V6.600Q6 6.500 4.500 8.200z" fill="#222"/></svg><svg class="abs" style="left:101px;top:110px" width="16" height="16" viewBox="0 0 16 16"><rect x="5" y="1" width="6" height="9.500" rx="3" fill="#5fdc3c"/><path d="M2.600 7.500a5.400 5.400 0 0 0 10.800 0M8 13v2" stroke="#f0f0f0" stroke-width="1.500" fill="none"/></svg><div class="abs pname" style="left:121px;top:107px">闫子怡的屏...</div>
<div class="abs lbar" style="top:214.5px"></div><div class="abs role" style="top:214.5px;width:71px;background:#0fcc7f">联席主持人</div><svg class="abs" style="left:85.5px;top:218px" width="15" height="15" viewBox="0 0 16 16"><rect x="4.800" y="1" width="6.400" height="9.500" rx="3.200" fill="#ececec"/><path d="M2.600 7.500a5.400 5.400 0 0 0 10.800 0M8 13v2" stroke="#ececec" stroke-width="1.600" fill="none"/><path d="M2 13.800L14 2.200" stroke="#f2483f" stroke-width="1.500"/></svg><div class="abs pname" style="left:105px;top:214.5px">张荣</div>
<div class="abs lbar" style="top:321.5px"></div><div class="abs role" style="top:321.5px;width:47px;background:#f5a31d">主持人</div><svg class="abs" style="left:61.5px;top:325px" width="15" height="15" viewBox="0 0 16 16"><rect x="4.800" y="1" width="6.400" height="9.500" rx="3.200" fill="#ececec"/><path d="M2.600 7.500a5.400 5.400 0 0 0 10.800 0M8 13v2" stroke="#ececec" stroke-width="1.600" fill="none"/><path d="M2 13.800L14 2.200" stroke="#f2483f" stroke-width="1.500"/></svg><div class="abs pname" style="left:81px;top:321.5px">韩钰</div>
<div class="abs lbar" style="top:428.5px"></div><div class="abs role" style="top:428.5px;width:71px;background:#0fcc7f">联席主持人</div><svg class="abs" style="left:85.5px;top:432px" width="15" height="15" viewBox="0 0 16 16"><rect x="4.800" y="1" width="6.400" height="9.500" rx="3.200" fill="#ececec"/><path d="M2.600 7.500a5.400 5.400 0 0 0 10.800 0M8 13v2" stroke="#ececec" stroke-width="1.600" fill="none"/><path d="M2 13.800L14 2.200" stroke="#f2483f" stroke-width="1.500"/></svg><div class="abs pname" style="left:105px;top:428.5px">任佳</div>
<div class="abs lbar" style="top:535.5px"></div><div class="abs role" style="top:535.5px;width:71px;background:#0fcc7f">联席主持人</div><svg class="abs" style="left:85.5px;top:539px" width="15" height="15" viewBox="0 0 16 16"><rect x="4.800" y="1" width="6.400" height="9.500" rx="3.200" fill="#ececec"/><path d="M2.600 7.500a5.400 5.400 0 0 0 10.800 0M8 13v2" stroke="#ececec" stroke-width="1.600" fill="none"/><path d="M2 13.800L14 2.200" stroke="#f2483f" stroke-width="1.500"/></svg><div class="abs pname" style="left:105px;top:535.5px">社工1701曹帅</div>
<div class="abs" style="left:45px;top:530px;width:109px;height:20px;background:rgba(10,10,10,.62)"></div>
<svg class="abs" style="left:93px;top:538px" width="12" height="10" viewBox="0 0 12 10"><path d="M1 0l10 10M11 0L1 10" stroke="#fff" stroke-width="1.200"/></svg>
</div>

<div class="abs" id="tip"><span>正在讲话: 闫子怡;</span></div>
<svg class="abs" style="left:1136px;top:131px" width="84" height="28" viewBox="1136 131 84 28"><defs><linearGradient id="lg" x1="0" y1="0" x2="1" y2="1"><stop offset="0" stop-color="#5a5d60"/><stop offset="1" stop-color="#3a3d40"/></linearGradient></defs><path d="M1139 146l11-11 8 8 8-8 14 11-11 10-11-8-9 8z" fill="url(#lg)" opacity=".9"/><path d="M1190.500 134v18" stroke="#66696c" stroke-width="1.200"/><path d="M1205 139.500v-3.300l-6.800 6 6.800 6v-3.400c3.600 0 6 1 7.600 3.800-.6-5.600-3.400-8.600-7.600-9.100z" fill="#9a9c9e"/></svg>
<div id="bottombar" class="abs">
<div class="bl" style="left:265.5px">解除静音</div><div class="bl" style="left:332.4px">开启视频</div><div class="bl" style="left:399.7px">共享屏幕</div><div class="bl" style="left:472.5px">邀请</div><div class="bl" style="left:540.3px">成员(74)</div><div class="bl" style="left:607.5px">聊天</div><div class="bl" style="left:675.0px">表情</div><div class="bl" style="left:742.5px">文档</div><div class="bl" style="left:810.0px">设置</div><svg class="abs" style="left:270px;top:0" width="620" height="62" viewBox="270 612 620 62" fill="#5f6269"><rect x="300.500" y="622.500" width="10" height="16.500" rx="5"/><path d="M297.300 634.500a8.300 8.300 0 0 0 16.600 0" fill="none" stroke="#5f6269" stroke-width="2"/><path d="M305.500 643v4.500M300.500 647.600h10" stroke="#5f6269" stroke-width="2" fill="none"/><path d="M294.500 647l21-22.500" stroke="#fafafa" stroke-width="3.600"/><path d="M294.500 647l21-22.500" stroke="#f5554d" stroke-width="1.700"/><rect x="358" y="626.500" width="19" height="17.500" rx="1.500"/><path d="M379 633l8-6v17.500l-8-6z"/><path d="M357 648.500l21.500-24" stroke="#fafafa" stroke-width="3.600"/><path d="M357 648.500l21.500-24" stroke="#f5554d" stroke-width="1.700"/><rect x="427.500" y="625.500" width="24.500" height="16.500" rx="1" fill="#555a60" stroke="#19c37d" stroke-width="1.600"/><path d="M431.500 647.500h16.500" stroke="#5f6269" stroke-width="1.800"/><path d="M434.500 637.500q1-5.500 7-5.500v-2.500l4.500 4-4.500 4v-2.500q-4.500-.3-7 2.500z" fill="#fff"/><path d="M334.8 639.500h8.400l-4.200-5z"/><path d="M402.40000000000003 639.500h8.400l-4.200-5z"/><path d="M469.8 639.500h8.400l-4.200-5z"/><circle cx="513" cy="628.800" r="5.300"/><path d="M500.800 647.600q0-11.600 12.200-11.600 6 0 9 3l-3 8.600z"/><circle cx="522.900" cy="641.600" r="6.200" stroke="#fafafa" stroke-width="1.200"/><path d="M522.900 638.600v6M519.900 641.600h6" stroke="#fff" stroke-width="1.400"/><circle cx="583.500" cy="628.800" r="5.300"/><path d="M572 647.600q0-11.600 11.800-11.600 10.500 0 11 11.600z"/><circle cx="578.600" cy="628.800" r="5.800" stroke="#fafafa" stroke-width="1.200"/><path d="M566.300 647.600q0-11.800 12.300-11.800 11.800 0 12.300 11.800z" stroke="#fafafa" stroke-width="1.200"/><path d="M638 623.800h19.500a2 2 0 0 1 2 2v15a2 2 0 0 1-2 2h-1.500v4l-5-4h-13a2 2 0 0 1-2-2v-15a2 2 0 0 1 2-2z"/><circle cx="642" cy="633.500" r="1.700" fill="#fff"/><circle cx="647.800" cy="633.500" r="1.700" fill="#fff"/><circle cx="653.600" cy="633.500" r="1.700" fill="#fff"/><circle cx="715" cy="635.700" r="12"/><path d="M707.500 637h15a7.500 7.500 0 0 1-15 0z" fill="#fff"/><circle cx="710.800" cy="632" r="1.500" fill="#fff"/><circle cx="719.200" cy="632" r="1.500" fill="#fff"/><path d="M774.500 623.800h11.500l6.800 6.800v15.400a1.600 1.600 0 0 1-1.600 1.600h-16.700a1.600 1.600 0 0 1-1.600-1.600v-20.600a1.600 1.600 0 0 1 1.600-1.600z"/><path d="M786.500 624v6.300h6.300z" fill="#9b9ea3"/><path d="M777 637h11.500M777 641.800h11.500" stroke="#fff" stroke-width="1.700"/><rect x="838" y="623.800" width="10.700" height="10.700" rx="1.800"/><rect x="838" y="636.900" width="10.700" height="10.700" rx="1.800"/><rect x="851.300" y="636.900" width="10.700" height="10.700" rx="1.800"/><rect x="851.900" y="624.400" width="9.500" height="9.500" rx="1.500" fill="#fff" stroke="#5f6269" stroke-width="1.200"/></svg><div class="abs" id="leave">离开会议</div><div class="abs" style="left:303px;top:62px;width:47px;height:2px;background:#55565e"></div>
</div>
<div id="darkstrip" class="abs"></div>
</body>
</html>
